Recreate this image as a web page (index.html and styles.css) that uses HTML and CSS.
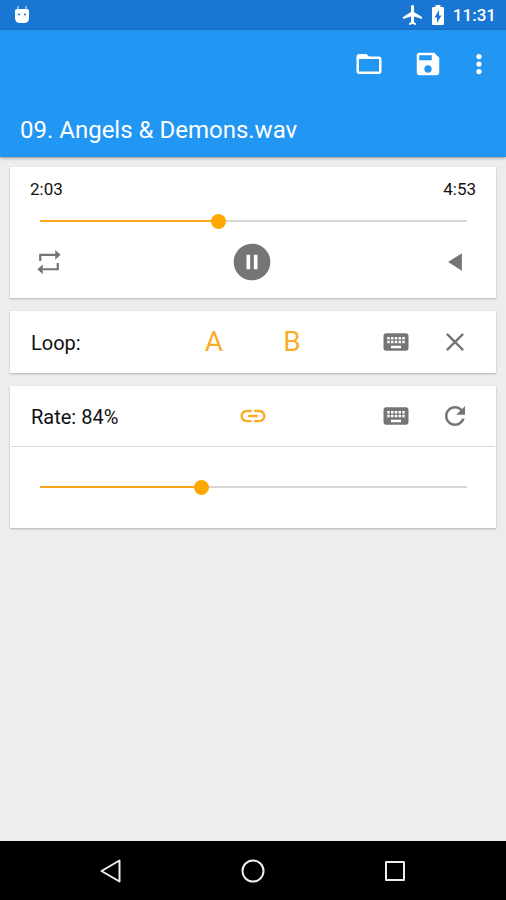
FILE: index.html
```html
<!DOCTYPE html>
<html lang="en">
<head>
<meta charset="utf-8">
<meta name="viewport" content="width=device-width, initial-scale=1">
<title>09. Angels &amp; Demons.wav</title>
<link rel="stylesheet" href="styles.css">
</head>
<body>
<div class="status-bar">
  <svg class="status-app" viewBox="0 0 16 20" aria-hidden="true">
    <path d="M4 1v4M12 1v4" stroke="#e3f2fd" stroke-width="1"/>
    <path d="M1 6Q1 4 3 4H13Q15 4 15 6V13Q15 18 10 18H6Q1 18 1 13Z" fill="#fff"/>
    <path d="M4 9.500h2M10 9.500h2" stroke="#1976d2" stroke-width="1.500"/>
  </svg>
  <div class="status-info">
    <svg class="status-icon" viewBox="0 0 24 24" aria-hidden="true"><path d="M21 16v-2l-8-5V3.500c0-.83-.67-1.500-1.500-1.500S10 2.670 10 3.500V9l-8 5v2l8-2.500V19l-2 1.500V22l3.500-1 3.500 1v-1.500L13 19v-5.500l8 2.500z"/></svg>
    <svg class="status-icon" viewBox="0 0 24 24" aria-hidden="true"><path d="M16.500 4H14.500V2h-5v2H7.500C6.700 4 6 4.600 6 5.300v15.400C6 21.400 6.600 22 7.300 22h9.400c.7 0 1.300-.6 1.300-1.300V5.300C18 4.600 17.400 4 16.500 4zM11 20v-5.500H8.500L13 7v5.500h2.500L11 20z"/></svg>
    <time class="clock">11:31</time>
  </div>
</div>

<header class="app-bar">
  <div class="toolbar">
    <button class="icon-button" type="button" aria-label="Open file"><svg class="icon" viewBox="0 0 24 24"><path d="M20 6h-8l-2-2H4c-1.100 0-1.990.9-1.990 2L2 18c0 1.100.9 2 2 2h16c1.100 0 2-.9 2-2V8c0-1.100-.9-2-2-2zm0 12H4V8h16v10z"/></svg></button>
    <button class="icon-button" type="button" aria-label="Save"><svg class="icon" viewBox="0 0 24 24"><path d="M17 3H5c-1.110 0-2 .9-2 2v14c0 1.100.89 2 2 2h14c1.100 0 2-.9 2-2V7l-4-4zm-5 16c-1.660 0-3-1.340-3-3s1.340-3 3-3 3 1.340 3 3-1.340 3-3 3zm3-10H5V5h10v4z"/></svg></button>
    <button class="icon-button menu-button" type="button" aria-label="More options"><svg class="icon" viewBox="0 0 24 24"><circle cx="12" cy="6" r="2.100"/><circle cx="12" cy="12" r="2.100"/><circle cx="12" cy="18" r="2.100"/></svg></button>
  </div>
  <h1 class="title">09. Angels &amp; Demons.wav</h1>
</header>

<main class="content">
  <section class="card player" aria-label="Player">
    <div class="times"><span>2:03</span><span>4:53</span></div>
    <input class="slider" type="range" min="0" max="100" value="42" style="--value: 42%" aria-label="Position">
    <div class="transport">
      <button class="icon-button" type="button" aria-label="Repeat"><svg class="icon" viewBox="0 0 24 24"><path d="M5 11.200V6.200h12.500M19 12.800v5H6.500" fill="none" stroke="currentColor" stroke-width="1.800"/><path d="M17 2.300 21.300 6.200 17 10.100zM7 13.900 2.700 17.800 7 21.700z"/></svg></button>
      <button class="icon-button" type="button" aria-label="Pause"><svg class="icon icon-large" viewBox="0 0 24 24"><path d="M12 2C6.480 2 2 6.480 2 12s4.480 10 10 10 10-4.480 10-10S17.520 2 12 2zm-1 14H9V8h2v8zm4 0h-2V8h2v8z"/></svg></button>
      <button class="icon-button" type="button" aria-label="Play backwards"><svg class="icon" viewBox="0 0 24 24"><path d="M17.500 5v14l-11-7z"/></svg></button>
    </div>
  </section>

  <section class="card" aria-label="Loop">
    <div class="row">
      <span class="row-label">Loop:</span>
      <div class="row-center">
        <button class="marker" type="button">A</button>
        <button class="marker" type="button">B</button>
      </div>
      <div class="row-actions">
        <button class="icon-button" type="button" aria-label="Enter loop points"><svg class="icon" viewBox="0 0 24 24"><path d="M20 5H4c-1.100 0-1.990.9-1.990 2L2 17c0 1.100.9 2 2 2h16c1.100 0 2-.9 2-2V7c0-1.100-.9-2-2-2zm-9 3h2v2h-2V8zm0 3h2v2h-2v-2zM8 8h2v2H8V8zm0 3h2v2H8v-2zm-1 2H5v-2h2v2zm0-3H5V8h2v2zm9 7H8v-2h8v2zm0-4h-2v-2h2v2zm0-3h-2V8h2v2zm3 3h-2v-2h2v2zm0-3h-2V8h2v2z"/></svg></button>
        <button class="icon-button" type="button" aria-label="Clear loop"><svg class="icon" viewBox="0 0 24 24"><path d="M5.500 5.500 18.500 18.500M18.500 5.500 5.500 18.500" fill="none" stroke="currentColor" stroke-width="1.900"/></svg></button>
      </div>
    </div>
  </section>

  <section class="card" aria-label="Rate">
    <div class="row row-divided">
      <label class="row-label" for="rate">Rate: 84%</label>
      <div class="row-center">
        <button class="icon-button accent" type="button" aria-label="Link rate and pitch"><svg class="icon" viewBox="0 0 24 24"><path d="M3.900 12c0-1.710 1.390-3.100 3.100-3.100h4V7H7c-2.760 0-5 2.240-5 5s2.240 5 5 5h4v-1.900H7c-1.710 0-3.100-1.390-3.100-3.100zM8 13h8v-2H8v2zm9-6h-4v1.900h4c1.710 0 3.100 1.390 3.100 3.100s-1.390 3.100-3.100 3.100h-4V17h4c2.760 0 5-2.240 5-5s-2.240-5-5-5z"/></svg></button>
      </div>
      <div class="row-actions">
        <button class="icon-button" type="button" aria-label="Enter rate"><svg class="icon" viewBox="0 0 24 24"><path d="M20 5H4c-1.100 0-1.990.9-1.990 2L2 17c0 1.100.9 2 2 2h16c1.100 0 2-.9 2-2V7c0-1.100-.9-2-2-2zm-9 3h2v2h-2V8zm0 3h2v2h-2v-2zM8 8h2v2H8V8zm0 3h2v2H8v-2zm-1 2H5v-2h2v2zm0-3H5V8h2v2zm9 7H8v-2h8v2zm0-4h-2v-2h2v2zm0-3h-2V8h2v2zm3 3h-2v-2h2v2zm0-3h-2V8h2v2z"/></svg></button>
        <button class="icon-button" type="button" aria-label="Reset rate"><svg class="icon" viewBox="0 0 24 24"><path d="M17.650 6.350C16.200 4.900 14.210 4 12 4c-4.420 0-7.990 3.580-7.990 8s3.570 8 7.990 8c3.730 0 6.840-2.550 7.730-6h-2.080c-.82 2.330-3.040 4-5.650 4-3.310 0-6-2.690-6-6s2.690-6 6-6c1.660 0 3.140.69 4.220 1.780L13 11h7V4l-2.350 2.350z"/></svg></button>
      </div>
    </div>
    <div class="rate-control">
      <input class="slider" id="rate" type="range" min="0" max="100" value="38" style="--value: 38%">
    </div>
  </section>
</main>

<nav class="nav-bar" aria-label="System">
  <button class="nav-button" type="button" aria-label="Back"><svg class="nav-icon" viewBox="0 0 28 28"><path d="M22.500 3.500v21L4.500 14z"/></svg></button>
  <button class="nav-button" type="button" aria-label="Home"><svg class="nav-icon" viewBox="0 0 28 28"><circle cx="14" cy="14" r="10.500"/></svg></button>
  <button class="nav-button" type="button" aria-label="Recent apps"><svg class="nav-icon" viewBox="0 0 28 28"><rect x="5" y="5" width="18" height="18"/></svg></button>
</nav>
</body>
</html>
```
FILE: styles.css
```css
* {
  box-sizing: border-box;
}

body {
  display: flex;
  flex-direction: column;
  min-height: 100vh;
  margin: 0;
  background: #ededed;
  color: #111;
  font-family: Roboto, sans-serif;
}

button {
  padding: 0;
  border: 0;
  background: none;
  color: inherit;
  font: inherit;
}

.status-bar {
  display: flex;
  align-items: center;
  justify-content: space-between;
  height: 30px;
  padding: 0 10px 0 14px;
  background: #1976d2;
  color: #fff;
}

.status-app {
  width: 16px;
  height: 20px;
}

.status-info {
  display: flex;
  align-items: center;
  gap: 1px;
}

.status-icon {
  width: 24px;
  height: 24px;
  fill: currentColor;
}

.clock {
  margin-left: 2px;
  font-size: 17px;
  font-weight: 500;
  line-height: 24px;
}

.app-bar {
  z-index: 1;
  padding-bottom: 10px;
  background: #2196f3;
  box-shadow: 0 1px 3px rgba(0, 0, 0, 0.4);
  color: #fff;
}

.toolbar {
  display: flex;
  justify-content: flex-end;
  height: 68px;
  padding-right: 5px;
}

.title {
  margin: 0;
  padding: 15px 20px 0;
  font-size: 24px;
  font-weight: 400;
  line-height: 34px;
}

.icon-button {
  display: flex;
  align-items: center;
  justify-content: center;
  width: 59px;
}

.menu-button {
  width: 44px;
}

.icon {
  width: 30px;
  height: 30px;
  fill: currentColor;
}

.icon-large {
  width: 44px;
  height: 44px;
}

.content {
  display: flex;
  flex: 1;
  flex-direction: column;
  gap: 13px;
  padding: 10px;
}

.card {
  background: #fff;
  box-shadow: 0 1px 2px rgba(0, 0, 0, 0.25);
}

.player {
  display: flex;
  flex-direction: column;
  padding: 10px 0 15px;
}

.times {
  display: flex;
  justify-content: space-between;
  padding: 0 20px;
  font-size: 17px;
  line-height: 24px;
}

.slider {
  --track-size: calc(100% - 15px);
  appearance: none;
  height: 40px;
  margin: 0 22px;
  background:
    linear-gradient(to right, #f9a61a var(--value), #d8d8d8 var(--value))
    center / var(--track-size) 2px no-repeat;
}

.slider::-webkit-slider-thumb {
  appearance: none;
  width: 15px;
  height: 15px;
  border-radius: 50%;
  background: #ffa800;
}

.transport {
  display: flex;
  justify-content: space-between;
  height: 42px;
  padding: 0 10px;
  color: #757575;
}

.transport,
.row-actions {
  color: #757575;
}

.row {
  display: grid;
  grid-template-columns: 1fr auto 1fr;
  align-items: stretch;
  height: 62px;
}

.row-divided {
  height: 61px;
  margin: 0 1px;
  border-bottom: 1px solid #dcdcdc;
}

.row-label {
  align-self: center;
  padding: 2px 0 0 21px;
  font-size: 20px;
  line-height: 28px;
}

.row-divided .row-label {
  padding-left: 20px;
}

.row-center,
.row-actions {
  display: flex;
}

.row-actions {
  justify-content: flex-end;
  padding-right: 12px;
}

.row-divided .row-actions {
  padding-right: 11px;
}

.marker {
  width: 78px;
  color: #f9ae2b;
  font-size: 28px;
  line-height: 36px;
}

.accent {
  color: #f9ae2b;
}

.transport {
  padding: 0 12px 0 9px;
}

.rate-control {
  display: flex;
  padding: 20px 0 21px;
}

.rate-control .slider {
  flex: 1;
}

.nav-bar {
  display: flex;
  justify-content: center;
  height: 59px;
  background: #000;
}

.nav-button {
  display: flex;
  align-items: center;
  justify-content: center;
  width: 28%;
}

.nav-icon {
  width: 28px;
  height: 28px;
  fill: none;
  stroke: #eee;
  stroke-width: 2;
  stroke-linejoin: round;
}
```
